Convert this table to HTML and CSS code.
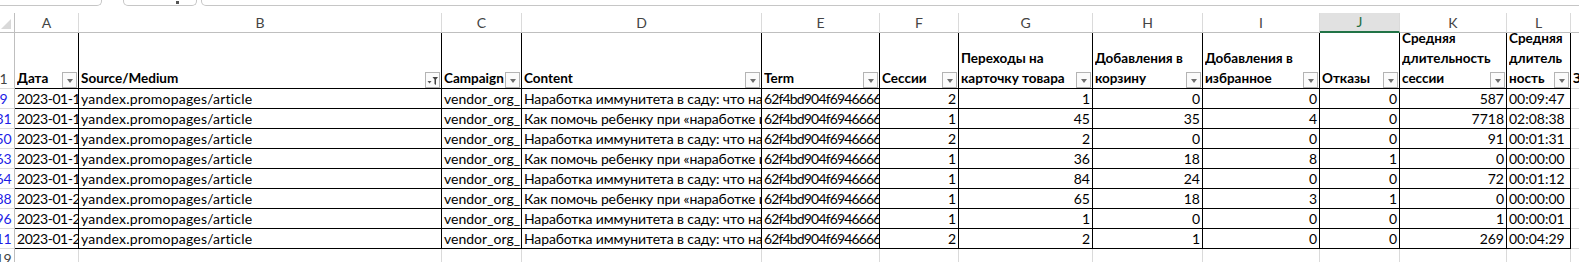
FILE: index.html
```html
<!DOCTYPE html>
<html lang="ru">
<head>
<meta charset="utf-8">
<title>Sheet</title>
<link rel="stylesheet" href="styles.css">
</head>
<body>
<div class="sheet">
  <div class="topbar">
    <div class="box box-name"></div>
    <div class="box box-fx"><span class="caret"></span></div>
    <div class="box box-formula"></div>
  </div>

  <div class="row colhdr">
    <div class="corner"><svg width="12" height="12" viewBox="0 0 12 12"><polygon points="11,1 11,11 1,11" fill="#d9d9d9"/></svg></div>
    <div class="ch">A</div><div class="ch">B</div><div class="ch">C</div><div class="ch">D</div>
    <div class="ch">E</div><div class="ch">F</div><div class="ch">G</div><div class="ch">H</div>
    <div class="ch">I</div><div class="ch ch-sel">J</div><div class="ch">K</div><div class="ch">L</div>
    <div class="ch ch-last"></div>
  </div>

  <div class="row hdr">
    <div class="rh rh-plain">1</div>
    <div class="hc"><span class="ht">Дата</span><span class="fb"></span></div>
    <div class="hc"><span class="ht">Source/Medium</span><span class="fb fb-on"><svg width="13" height="14" viewBox="0 0 13 14"><polygon points="1.5,8 5.5,8 3.5,10.5" fill="#555"/><path d="M6.5 4h5.5l-2 2.5v5.5l-1.5-1v-4.5z" fill="#444"/></svg></span></div>
    <div class="hc"><span class="ht">Campaign</span><span class="fb"></span></div>
    <div class="hc"><span class="ht">Content</span><span class="fb"></span></div>
    <div class="hc"><span class="ht">Term</span><span class="fb"></span></div>
    <div class="hc"><span class="ht">Сессии</span><span class="fb"></span></div>
    <div class="hc"><span class="ht">Переходы на<br>карточку товара</span><span class="fb"></span></div>
    <div class="hc"><span class="ht">Добавления в<br>корзину</span><span class="fb"></span></div>
    <div class="hc"><span class="ht">Добавления в<br>избранное</span><span class="fb"></span></div>
    <div class="hc"><span class="ht">Отказы</span><span class="fb"></span></div>
    <div class="hc"><span class="ht">Средняя<br>длительность<br>сессии</span><span class="fb"></span></div>
    <div class="hc"><span class="ht">Средняя<br>длитель<br>ность</span><span class="fb"></span></div>
    <div class="hc hc-last"><span class="ht">Заказы</span></div>
  </div>

  <div class="row data">
    <div class="rh">9</div>
    <div class="c dt">2023-01-15</div><div class="c src">yandex.promopages/article</div><div class="c">vendor_org_</div>
    <div class="c ru">Наработка иммунитета в саду: что надо знать родителям</div><div class="c hx">62f4bd904f6946666a1c</div>
    <div class="c n">2</div><div class="c n">1</div><div class="c n">0</div><div class="c n">0</div><div class="c n">0</div><div class="c n">587</div><div class="c">00:09:47</div><div class="c c-last"></div>
  </div>
  <div class="row data">
    <div class="rh">31</div>
    <div class="c dt">2023-01-16</div><div class="c src">yandex.promopages/article</div><div class="c">vendor_org_</div>
    <div class="c ru">Как помочь ребенку при «наработке иммунитета»</div><div class="c hx">62f4bd904f6946666a1c</div>
    <div class="c n">1</div><div class="c n">45</div><div class="c n">35</div><div class="c n">4</div><div class="c n">0</div><div class="c n">7718</div><div class="c">02:08:38</div><div class="c c-last"></div>
  </div>
  <div class="row data">
    <div class="rh">50</div>
    <div class="c dt">2023-01-17</div><div class="c src">yandex.promopages/article</div><div class="c">vendor_org_</div>
    <div class="c ru">Наработка иммунитета в саду: что надо знать родителям</div><div class="c hx">62f4bd904f6946666a1c</div>
    <div class="c n">2</div><div class="c n">2</div><div class="c n">0</div><div class="c n">0</div><div class="c n">0</div><div class="c n">91</div><div class="c">00:01:31</div><div class="c c-last"></div>
  </div>
  <div class="row data">
    <div class="rh">63</div>
    <div class="c dt">2023-01-18</div><div class="c src">yandex.promopages/article</div><div class="c">vendor_org_</div>
    <div class="c ru">Как помочь ребенку при «наработке иммунитета»</div><div class="c hx">62f4bd904f6946666a1c</div>
    <div class="c n">1</div><div class="c n">36</div><div class="c n">18</div><div class="c n">8</div><div class="c n">1</div><div class="c n">0</div><div class="c">00:00:00</div><div class="c c-last"></div>
  </div>
  <div class="row data">
    <div class="rh">64</div>
    <div class="c dt">2023-01-19</div><div class="c src">yandex.promopages/article</div><div class="c">vendor_org_</div>
    <div class="c ru">Наработка иммунитета в саду: что надо знать родителям</div><div class="c hx">62f4bd904f6946666a1c</div>
    <div class="c n">1</div><div class="c n">84</div><div class="c n">24</div><div class="c n">0</div><div class="c n">0</div><div class="c n">72</div><div class="c">00:01:12</div><div class="c c-last"></div>
  </div>
  <div class="row data">
    <div class="rh">88</div>
    <div class="c dt">2023-01-20</div><div class="c src">yandex.promopages/article</div><div class="c">vendor_org_</div>
    <div class="c ru">Как помочь ребенку при «наработке иммунитета»</div><div class="c hx">62f4bd904f6946666a1c</div>
    <div class="c n">1</div><div class="c n">65</div><div class="c n">18</div><div class="c n">3</div><div class="c n">1</div><div class="c n">0</div><div class="c">00:00:00</div><div class="c c-last"></div>
  </div>
  <div class="row data">
    <div class="rh">96</div>
    <div class="c dt">2023-01-21</div><div class="c src">yandex.promopages/article</div><div class="c">vendor_org_</div>
    <div class="c ru">Наработка иммунитета в саду: что надо знать родителям</div><div class="c hx">62f4bd904f6946666a1c</div>
    <div class="c n">1</div><div class="c n">1</div><div class="c n">0</div><div class="c n">0</div><div class="c n">0</div><div class="c n">1</div><div class="c">00:00:01</div><div class="c c-last"></div>
  </div>
  <div class="row data">
    <div class="rh">11</div>
    <div class="c dt">2023-01-22</div><div class="c src">yandex.promopages/article</div><div class="c">vendor_org_</div>
    <div class="c ru">Наработка иммунитета в саду: что надо знать родителям</div><div class="c hx">62f4bd904f6946666a1c</div>
    <div class="c n">2</div><div class="c n">2</div><div class="c n">1</div><div class="c n">0</div><div class="c n">0</div><div class="c n">269</div><div class="c">00:04:29</div><div class="c c-last"></div>
  </div>

  <div class="row empty">
    <div class="rh rh-plain">19</div>
    <div class="e"></div><div class="e"></div><div class="e"></div><div class="e"></div><div class="e"></div><div class="e"></div>
    <div class="e"></div><div class="e"></div><div class="e"></div><div class="e"></div><div class="e"></div><div class="e"></div><div class="e"></div>
  </div>
</div>
</body>
</html>
```

FILE: styles.css
```css
* { box-sizing: border-box; }
html, body { margin: 0; padding: 0; }
body {
  width: 1579px;
  height: 262px;
  overflow: hidden;
  background: #fff;
  font-family: Lato, "Noto Sans", "Liberation Sans", sans-serif;
  font-size: 14px;
  color: #000;
}
.sheet { width: 1579px; }

.topbar {
  height: 13px;
  display: flex;
  align-items: flex-start;
  background: #fff;
}
.box {
  height: 6px;
  background: #fff;
  border: 1px solid #c6c6c6;
  border-top: none;
  border-radius: 0 0 5px 5px;
}
.box-name { width: 110px; margin-left: -8px; }
.box-fx { width: 74px; margin-left: 21px; display: flex; justify-content: flex-end; padding-right: 17px; }
.box-fx .caret { width: 3px; height: 3px; margin-top: 1px; background: #555; }
.box-formula { flex: 1; margin-left: 4px; margin-right: -10px; }

.row {
  display: grid;
  grid-template-columns: 15px 64px 363px 80px 240px 118px 79px 134px 110px 117px 80px 107px 64px 1fr;
}

.colhdr { height: 20px; }
.corner {
  border-right: 1px solid #bfbfbf;
  border-bottom: 1px solid #bfbfbf;
  display: flex;
  align-items: flex-end;
  padding: 0 2px 2px 0;
  justify-content: flex-end;
  overflow: hidden;
}
.ch {
  border-right: 1px solid #dadada;
  border-bottom: 1px solid #bfbfbf;
  color: #444;
  line-height: 19px;
  text-align: center;
  overflow: hidden;
}
.ch-sel {
  background: #e1e1e1;
  color: #1e6e42;
  border-bottom: 2px solid #217346;
  line-height: 18px;
}
.ch-last { border-right: none; }

.rh {
  border-right: 1px solid #bfbfbf;
  border-bottom: 1px solid #dadada;
  color: #1c1ce6;
  line-height: 19px;
  display: flex;
  justify-content: center;
  align-items: flex-end;
  padding-right: 7px;
  overflow: hidden;
  white-space: nowrap;
}
.rh-plain { color: #444; }

.hdr { height: 56px; }
.hc {
  position: relative;
  border-right: 1px solid #000;
  border-bottom: 1px solid #000;
  display: flex;
  align-items: flex-end;
  overflow: hidden;
  font-weight: bold;
  font-size: 13.5px;
  line-height: 20px;
  padding-left: 2px;
}
.ht {
  flex: 1;
  min-width: 0;
  white-space: nowrap;
  overflow: hidden;
}
.hc-last { border-right: none; border-bottom-color: #dadada; }
.fb {
  position: absolute;
  right: 1px;
  bottom: 0;
  width: 15px;
  height: 16px;
  border: 1px solid #b4b4b4;
  background: #fbfbfb;
  display: flex;
  align-items: center;
  justify-content: center;
}
.fb::before {
  content: "";
  border-left: 3.5px solid transparent;
  border-right: 3.5px solid transparent;
  border-top: 4px solid #6e6e6e;
  margin-top: 1px;
}
.fb-on::before { display: none; }

.data { height: 20px; }
.c {
  border-right: 1px solid #000;
  border-bottom: 1px solid #000;
  line-height: 19px;
  padding: 0 2px;
  white-space: nowrap;
  overflow: hidden;
}
.dt { letter-spacing: -0.45px; }
.hx { letter-spacing: -0.85px; }
.src { letter-spacing: 0.2px; }
.ru { letter-spacing: -0.12px; }
.n { text-align: right; }
.c-last { border-right: none; border-bottom-color: #dadada; }

.empty { height: 20px; }
.empty .rh { align-items: flex-start; }
.e { border-right: 1px solid #dadada; }
.e:last-child { border-right: none; }
```
